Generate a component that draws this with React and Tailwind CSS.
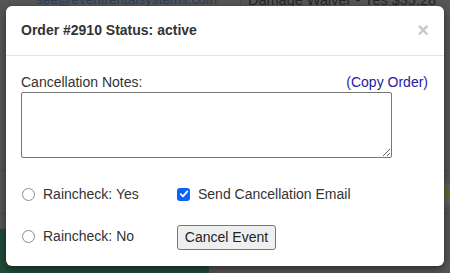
export default function App() {
  return (
    <div className="relative w-[450px] h-[273px] overflow-hidden bg-[#565656]" style={{ fontFamily: '"Liberation Sans", Arial, sans-serif' }}>
      {/* dimmed page behind */}
      <div className="absolute inset-0">
        <div className="absolute left-[36px] top-[-10px] text-[13.5px] text-[#2b3f5e] whitespace-nowrap">see@eventrentalsystems.com</div>
        <div className="absolute left-[209px] top-0 w-px h-[12px] bg-[#4a4a4a]" />
        <div className="absolute left-[240px] top-0 w-px h-[12px] bg-[#4a4a4a]" />
        <div className="absolute left-[248px] top-[-10px] text-[14.5px] text-[#262626] whitespace-nowrap">Damage Waiver - Yes $35.28</div>
        <div className="absolute left-0 top-[170px] w-[450px] h-px bg-[#4c4c4c]" />
        <div className="absolute left-0 top-[213px] w-[450px] h-px bg-[#4c4c4c]" />
        <div className="absolute left-0 top-[229px] w-[209px] h-[44px] bg-[#1f4a38]" />
        <div className="absolute left-[444px] top-[183px] w-[6px] h-[22px] bg-[#5f5f5f]" />
        <svg className="absolute left-[443px] top-[186px]" width="7" height="14" viewBox="0 0 7 14">
          <path d="M1 1 L6 7 L1 13" fill="none" stroke="#6b6a1c" strokeWidth="2.5" />
        </svg>
      </div>

      {/* modal */}
      <div className="absolute left-[6px] top-[6px] w-[438px] h-[260px] bg-white rounded-[6px] shadow-[0_3px_9px_rgba(0,0,0,0.5)] flex flex-col">
        <div className="h-[50px] border-b border-[#e5e5e5] flex items-center justify-between pl-[15px] pr-[15px]">
          <div className="text-[14px] font-bold text-[#333]">Order #2910 Status: active</div>
          <div className="text-[20px] font-bold text-[#c8c8c8] leading-none mt-[-1px]">×</div>
        </div>
        <div className="flex flex-col pl-[15px] pr-[16px] pt-[17px]">
          <div className="flex items-center justify-between text-[14px] leading-[18px]">
            <span className="text-[#333]">Cancellation Notes:</span>
            <a className="text-[#1f1aa0] cursor-pointer">(Copy Order)</a>
          </div>
          <textarea className="mt-[1px] w-[371px] h-[66px] border border-[#767676] rounded-[2px] resize-y outline-none" />
          <div className="grid grid-cols-[156px_1fr] mt-[23px] text-[14px] text-[#333]">
            <label className="flex items-center gap-[8px] h-[26px]">
              <span className="w-[13px] h-[13px] rounded-full border border-[#8a8a8a] ml-[1px] shrink-0" />
              <span>Raincheck: Yes</span>
            </label>
            <label className="flex items-center gap-[8px] h-[26px]">
              <span className="w-[13px] h-[13px] rounded-[3px] bg-[#0b63f6] flex items-center justify-center shrink-0">
                <svg width="10" height="10" viewBox="0 0 10 10">
                  <path d="M1.8 5.2 L4 7.4 L8.3 2.4" fill="none" stroke="white" strokeWidth="1.8" strokeLinecap="round" strokeLinejoin="round" />
                </svg>
              </span>
              <span>Send Cancellation Email</span>
            </label>
            <label className="flex items-center gap-[8px] h-[25px] mt-[18px]">
              <span className="w-[13px] h-[13px] rounded-full border border-[#8a8a8a] ml-[1px] shrink-0 mb-[2px]" />
              <span className="mb-[2px]">Raincheck: No</span>
            </label>
            <div className="flex items-center h-[25px] mt-[18px]">
              <button className="w-[99px] h-[25px] bg-[#efefef] border border-[#767676] rounded-[3px] text-[14px] text-[#222]">Cancel Event</button>
            </div>
          </div>
        </div>
      </div>
    </div>
  );
}
